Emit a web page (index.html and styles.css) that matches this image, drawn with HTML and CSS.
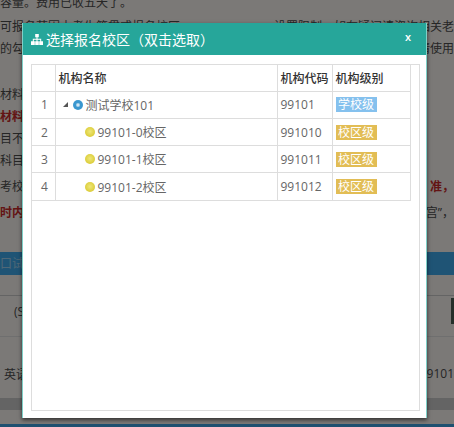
FILE: index.html
```html
<!DOCTYPE html>
<html>
   <head>
      <meta charset="UTF-8">
      <title>选择报名校区</title>
      <link rel="stylesheet" href="styles.css">
   </head>
   <body>
      <div class="page">
         <p class="line line-first"><span>容量。费用已收五天了。</span></p>
         <p class="line"><span>可报名范围由考生籍贯或报名校区</span><span>设置限制，如有疑问请咨询相关老</span></p>
         <p class="line"><span>的勾选</span><span>请使用</span></p>
         <p class="line line-four"><span>材料科目</span></p>
         <p class="line red"><span>材料科目</span></p>
         <p class="line"><span>目不可</span></p>
         <p class="line"><span>科目表</span></p>
         <p class="line line-gap"><span>考校区</span><span class="red">准，</span></p>
         <p class="line line-gap"><span class="red">时内</span><span>宫”，</span></p>
         <div class="page-bar">口试</div>
         <div class="page-tools"><span>(S</span><i class="page-btn"></i></div>
         <div class="page-row"><span>英语</span><span>9101</span></div>
         <div class="page-band"></div>
         <div class="page-foot"></div>
      </div>
      <div class="backdrop"></div>

      <div class="modal">
         <div class="modal-head">
            <h4>
               <svg class="sitemap" viewBox="0 0 12 11"><path d="M4.2 0h3.6v3.2H6.5v1.6h3.7v2.4H12V11H8.2V7.2h1V5.8H6.5v1.4h1.3V11H4.2V7.2h1.3V5.8H2.8v1.4h1V11H0V7.2h1.8V4.8h3.7V3.2H4.2z"/></svg>
               选择报名校区（双击选取）
            </h4>
            <span class="close">x</span>
         </div>
         <div class="modal-body">
            <div class="grid-box">
               <table>
                  <tr>
                     <th class="col-num"></th>
                     <th class="col-name">机构名称</th>
                     <th class="col-code">机构代码</th>
                     <th class="col-level">机构级别</th>
                  </tr>
                  <tr>
                     <td class="num">1</td>
                     <td>
                        <div class="tree">
                           <svg class="arrow" viewBox="0 0 5 5"><path d="M5 0v5H0z"/></svg>
                           <i class="dot dot-blue"></i>测试学校101
                        </div>
                     </td>
                     <td>99101</td>
                     <td><span class="tag tag-blue">学校级</span></td>
                  </tr>
                  <tr>
                     <td class="num">2</td>
                     <td><div class="tree tree-child"><i class="dot dot-yellow"></i>99101-0校区</div></td>
                     <td>991010</td>
                     <td><span class="tag tag-yellow">校区级</span></td>
                  </tr>
                  <tr>
                     <td class="num">3</td>
                     <td><div class="tree tree-child"><i class="dot dot-yellow"></i>99101-1校区</div></td>
                     <td>991011</td>
                     <td><span class="tag tag-yellow">校区级</span></td>
                  </tr>
                  <tr>
                     <td class="num">4</td>
                     <td><div class="tree tree-child"><i class="dot dot-yellow"></i>99101-2校区</div></td>
                     <td>991012</td>
                     <td><span class="tag tag-yellow">校区级</span></td>
                  </tr>
               </table>
            </div>
         </div>
      </div>
   </body>
</html>
```

FILE: styles.css
```css
*
{
   box-sizing: border-box;
}

html, body
{
   height: 100%;
}

body
{
   margin: 0;
   overflow: hidden;
   background: #f6f2ee;
   font-family: "Open Sans", "Noto Sans CJK SC", sans-serif;
   font-size: 12px;
   color: #4c4c4c;
}

/* page behind the dialog */
.page
{
   height: 427px;
   display: flex;
   flex-direction: column;
   overflow: hidden;
}

.page > *
{
   flex: none;
}

.line
{
   display: flex;
   justify-content: space-between;
   margin: 0;
   height: 22px;
   line-height: 22px;
   white-space: nowrap;
   overflow: hidden;
}

.line-first
{
   height: 16px;
   line-height: 6px;
}

.line-four
{
   margin-top: 24px;
}

.line-gap
{
   margin-top: 4px;
}

.red
{
   color: #c62828;
   font-weight: bold;
}

.page-bar
{
   margin-top: 28px;
   height: 23px;
   line-height: 23px;
   background: #3fa8ea;
   color: #9fd0ee;
}

.page-tools
{
   display: flex;
   justify-content: space-between;
   align-items: center;
   margin-top: 20px;
   height: 42px;
   padding: 0 0 10px 14px;
   border-top: 1px solid #c8c8c8;
   border-bottom: 1px solid #dedede;
}

.page-btn
{
   width: 3px;
   height: 26px;
   background: #4b5f55;
}

.page-row
{
   display: flex;
   justify-content: space-between;
   align-items: center;
   height: 61px;
   padding: 12px 0 0 4px;
}

.page-band
{
   height: 12px;
   background: #c8c8c8;
}

.page-foot
{
   margin-top: 14px;
   height: 3px;
   background: #3ca0e0;
}

.backdrop
{
   position: absolute;
   top: 0;
   left: 0;
   right: 0;
   bottom: 0;
   background: rgba(0, 0, 0, 0.5);
}

/* dialog */
.modal
{
   position: absolute;
   top: 23px;
   left: 22px;
   width: 405px;
   height: 395px;
   display: flex;
   flex-direction: column;
   background: #ffffff;
   border-left: 1px solid #7fd0c8;
   border-right: 1px solid #7fd0c8;
   box-shadow: 0 2px 4px rgba(0, 0, 0, 0.6);
}

.modal-head
{
   display: flex;
   justify-content: space-between;
   align-items: center;
   height: 32px;
   padding: 0 15px 0 8px;
   background: #26a69a;
   color: #ffffff;
}

.modal-head h4
{
   display: flex;
   align-items: center;
   gap: 3px;
   margin: 0;
   font-size: 14px;
   font-weight: normal;
}

.sitemap
{
   width: 12px;
   height: 11px;
   fill: #ffffff;
}

.close
{
   font-size: 11px;
   font-weight: 600;
   margin-top: -6px;
}

.modal-body
{
   flex: 1;
   display: flex;
   padding: 9px 6px 7px 8px;
}

.grid-box
{
   flex: 1;
   border: 1px solid #dddddd;
   background: #ffffff;
}

table
{
   width: 378px;
   border-collapse: collapse;
   table-layout: fixed;
   font-size: 12px;
}

th, td
{
   height: 27.2px;
   padding: 0 3px;
   border: 1px solid #dddddd;
   border-top: 0;
   text-align: left;
   white-space: nowrap;
   overflow: hidden;
   color: #666666;
   font-weight: normal;
}

tr:first-child th
{
   height: 26.4px;
   color: #333333;
   font-weight: 500;
}

th:first-child, td:first-child
{
   border-left: 0;
}

.col-num
{
   width: 23px;
}

.col-name
{
   width: 222px;
}

.col-code
{
   width: 55px;
}

.col-level
{
   width: 78px;
}

.num
{
   padding-left: 9px;
}

.tree
{
   display: flex;
   align-items: center;
   padding-left: 4px;
}

.tree-child
{
   padding-left: 26px;
}

.arrow
{
   width: 5px;
   height: 5px;
   margin-right: 5px;
   fill: #555555;
}

.dot
{
   display: block;
   width: 10px;
   height: 10px;
   margin-right: 3px;
   border-radius: 50%;
}

.dot-blue
{
   background: radial-gradient(circle at 50% 50%, #cfe6f5 0, #cfe6f5 15%, #3a97cf 35%, #3a97cf 100%);
}

.dot-yellow
{
   background: radial-gradient(circle at 50% 45%, #eee77a 0, #dccd3a 70%, #c9b82e 100%);
}

.tag
{
   display: inline-block;
   width: 41px;
   height: 15px;
   line-height: 15px;
   text-align: center;
   color: #ffffff;
   font-size: 12px;
}

.tag-blue
{
   background: #85c1ee;
}

.tag-yellow
{
   background: #e2bd55;
}
```
